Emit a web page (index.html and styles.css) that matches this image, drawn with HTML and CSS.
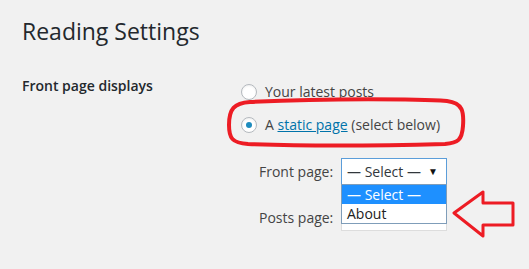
FILE: index.html
```html
<!DOCTYPE html>
<html lang="en">
<head>
    <meta charset="UTF-8">
    <title>Reading Settings</title>
    <link rel="stylesheet" href="styles.css">
</head>
<body>
<div class="wrap">
    <h1>Reading Settings</h1>
    <div class="form-row">
        <div class="row-label">Front page displays</div>
        <div class="row-field">
            <label class="choice"><span class="radio"></span>Your latest posts</label>
            <label class="choice"><span class="radio checked"></span>A&nbsp;<a href="#">static page</a>&nbsp;(select below)</label>
            <div class="page-pick">
                <div class="pick-row">
                    <span class="pick-label">Front page:</span>
                    <div class="select-holder">
                        <div class="select open">— Select —<span class="caret">▼</span></div>
                        <ul class="dropdown">
                            <li class="active">— Select —</li>
                            <li>About</li>
                        </ul>
                    </div>
                </div>
                <div class="pick-row">
                    <span class="pick-label">Posts page:</span>
                    <div class="select ghost"></div>
                </div>
            </div>
        </div>
    </div>
</div>

<!-- red annotation marks -->
<svg class="marks" width="529" height="269" viewBox="0 0 529 269">
    <path d="M250 102 C330 98 420 99 447 101 C463 103 464 112 463 126 C462 140 458 143 445 144 C370 146 300 146 248 144 C232 143 229 138 229 125 C229 109 234 103 250 102 Z" />
    <path d="M454 213 L483 192 L483 203 L513 203 L513 225 L483 225 L483 236 Z" />
</svg>
</body>
</html>
```
FILE: styles.css
```css
body {
    margin: 0;
    background-color: #f1f1f1;
    font-family: 'Open Sans', sans-serif;
    font-size: 14px;
    color: #444;
    width: 529px;
    height: 269px;
    overflow: hidden;
    position: relative;
}

.wrap {
    padding: 17px 0 0 22px;
}

h1 {
    margin: 0;
    font-size: 23px;
    font-weight: 400;
    line-height: 29px;
    color: #23282d;
}

.form-row {
    display: grid;
    grid-template-columns: 219px auto;
    margin-top: 30px;
}

.row-label {
    font-weight: 600;
    color: #23282d;
    line-height: 19px;
}

.row-field {
    padding-top: 6px;
}

.choice {
    display: flex;
    align-items: center;
    height: 19px;
    margin-bottom: 14px;
    line-height: 19px;
}

.choice a {
    color: #0073aa;
}

.radio {
    width: 14px;
    height: 14px;
    border: 1px solid #b4b9be;
    border-radius: 50%;
    background: #fff;
    box-shadow: inset 0 1px 2px rgba(0, 0, 0, 0.07);
    margin-right: 8px;
    position: relative;
}

.radio.checked::after {
    content: '';
    position: absolute;
    left: 4px;
    top: 4px;
    width: 6px;
    height: 6px;
    border-radius: 50%;
    background: #1e8cbe;
}

.page-pick {
    padding-left: 18px;
    padding-top: 10px;
}

.pick-row {
    display: flex;
    align-items: flex-start;
    height: 46px;
}

.pick-label {
    width: 82px;
    padding-top: 4px;
    line-height: 19px;
}

.select-holder {
    position: relative;
}

.select {
    box-sizing: border-box;
    width: 106px;
    height: 27px;
    border: 1px solid #5b9dd9;
    background: #fff;
    color: #32373c;
    padding: 3px 0 0 5px;
    line-height: 19px;
    position: relative;
}

.caret {
    position: absolute;
    right: 8px;
    top: 3px;
    font-size: 10px;
    color: #111;
}

.dropdown {
    position: absolute;
    left: 0;
    top: 26px;
    box-sizing: border-box;
    width: 106px;
    margin: 0;
    padding: 0;
    list-style: none;
    background: #fff;
    border: 1px solid #7f9db9;
    z-index: 2;
}

.dropdown li {
    height: 19px;
    line-height: 19px;
    padding-left: 5px;
    color: #222;
}

.dropdown li.active {
    background: #1e90ff;
    color: #fff;
}

.select.ghost {
    border-color: #ddd;
}

.marks {
    position: absolute;
    left: 0;
    top: 0;
    fill: none;
    stroke: #ed1c24;
    stroke-width: 4;
    stroke-linejoin: round;
}

.marks path + path {
    stroke-width: 3;
}
```
